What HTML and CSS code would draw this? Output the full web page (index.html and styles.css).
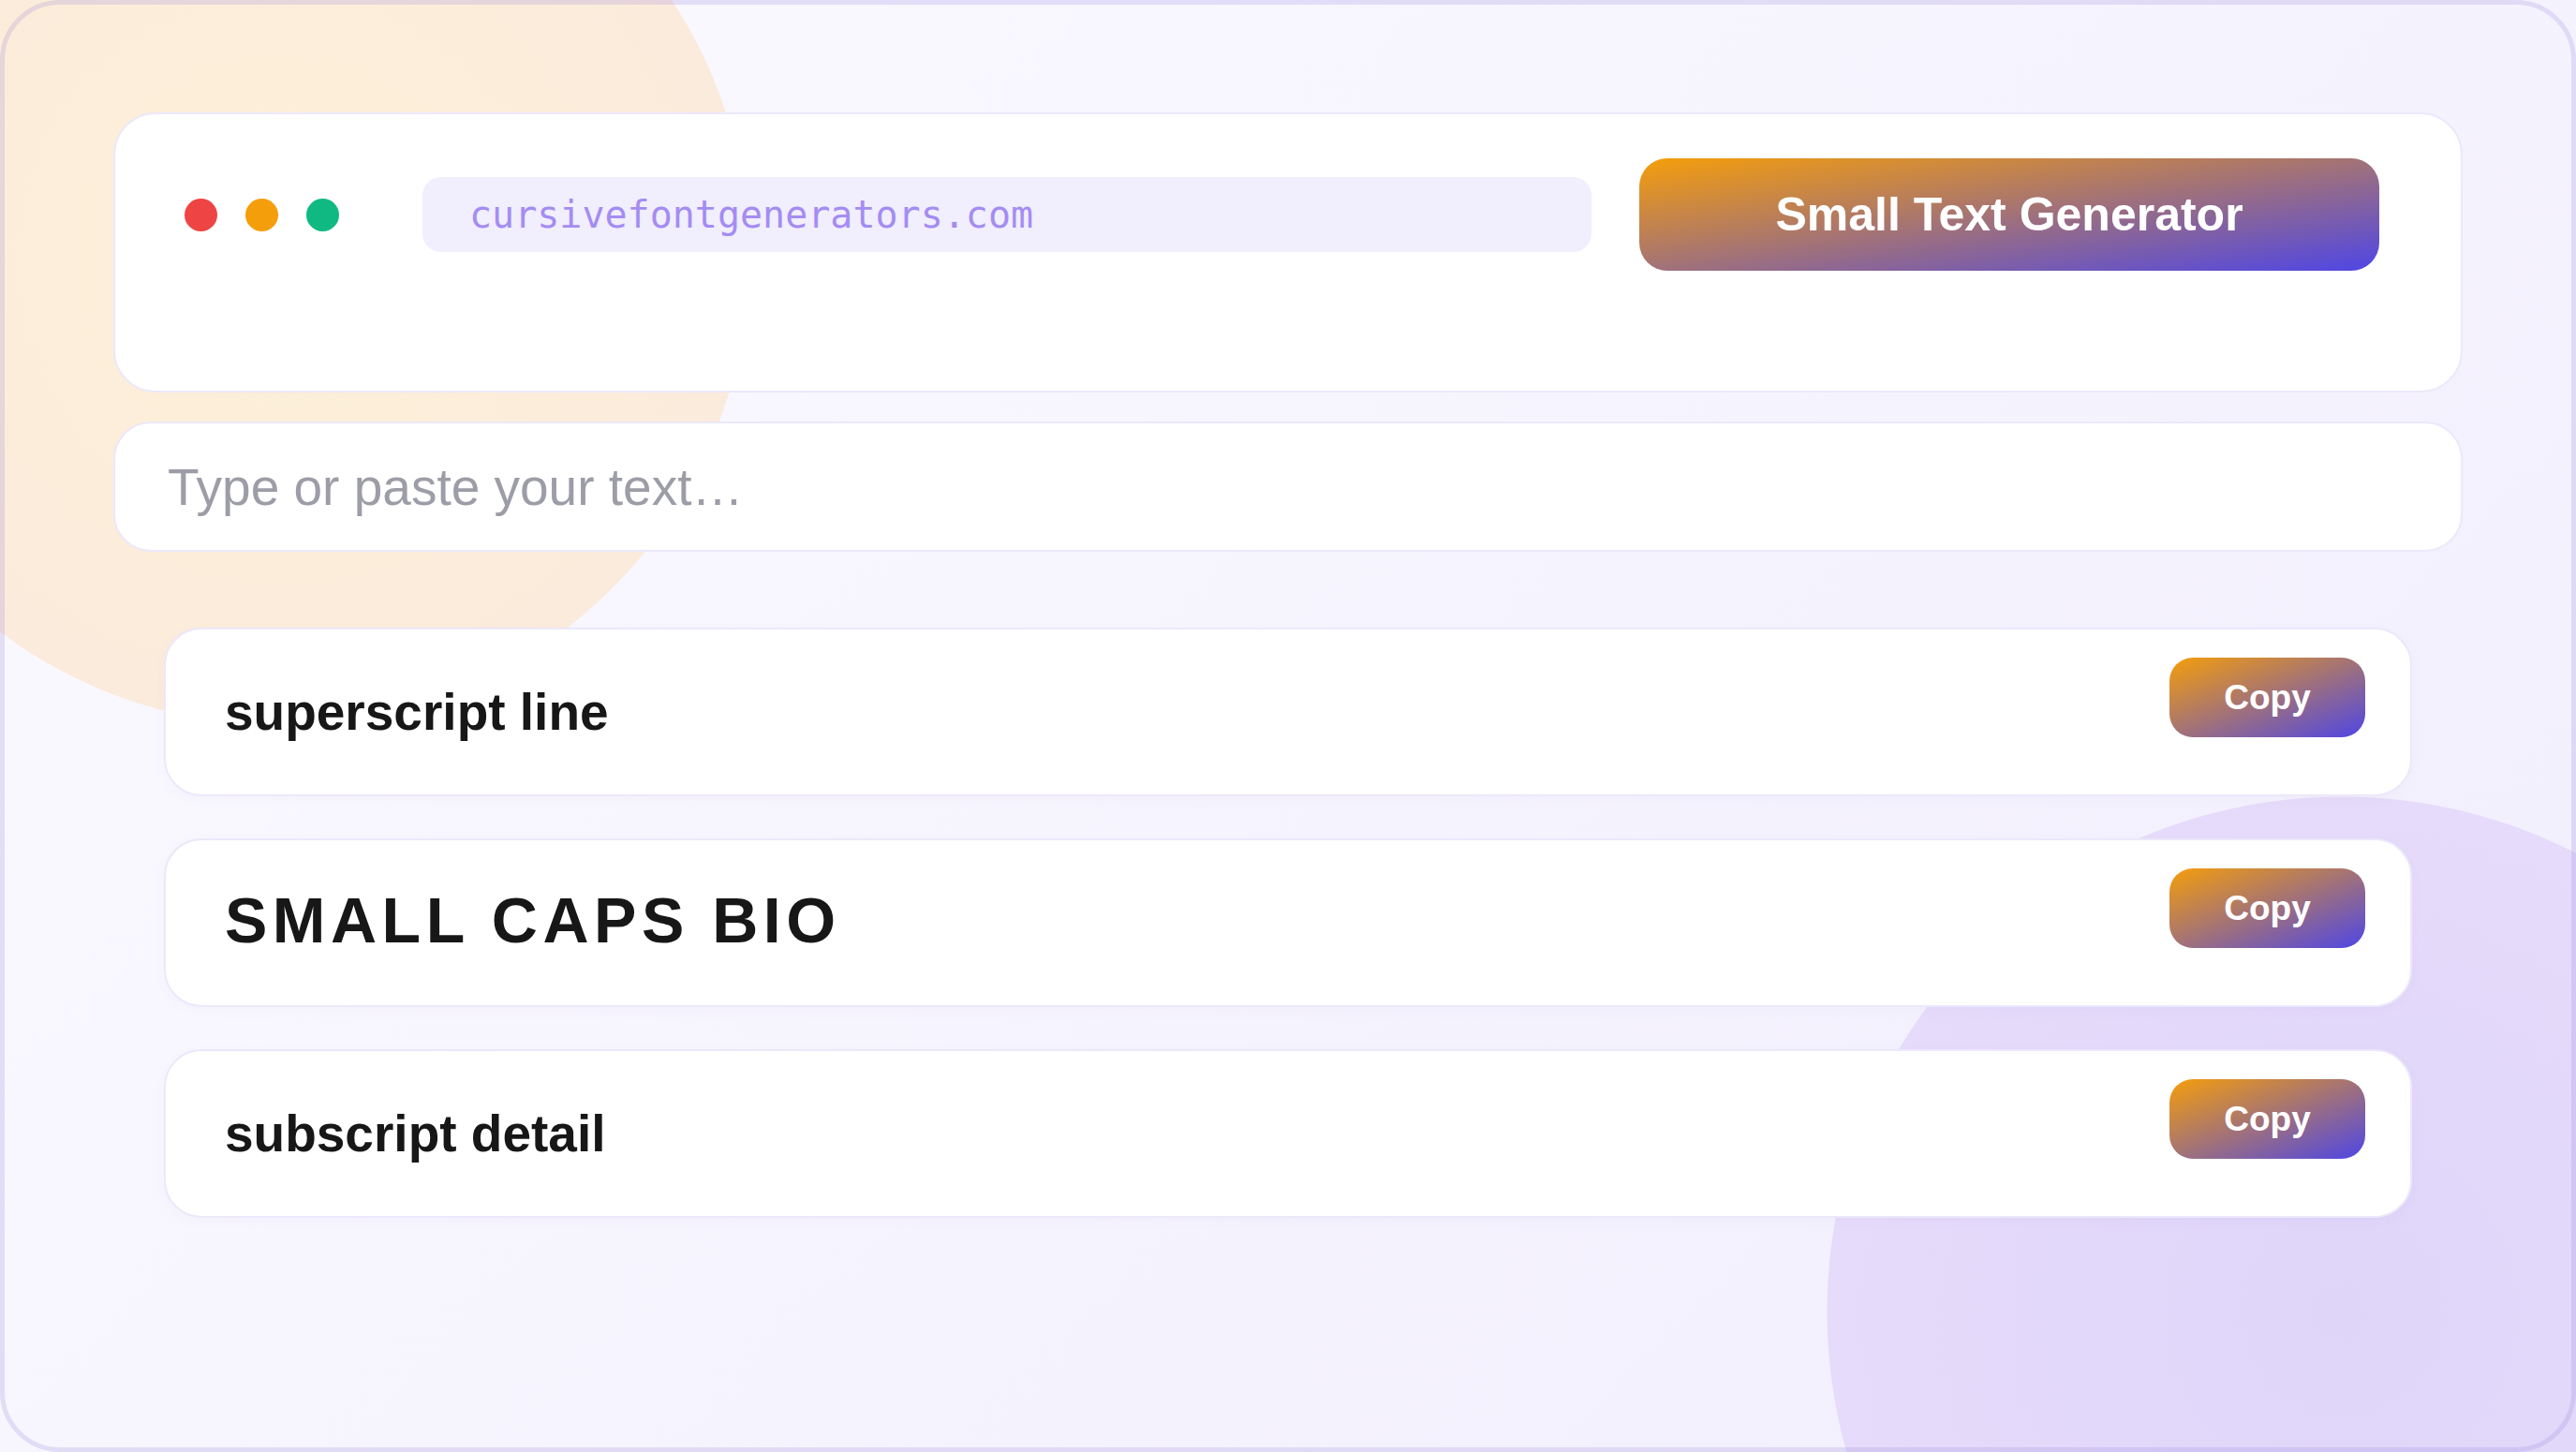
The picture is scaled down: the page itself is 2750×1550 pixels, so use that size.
FILE: index.html
```html
<!DOCTYPE html>
<html lang="en">
  <head>
    <title>Small Text Generator</title>
    <meta charset="utf-8" />
    <link rel="stylesheet" href="styles.css">
  </head>
  <body>
    <div class="frame">
      <div class="browser">
        <div class="bar">
          <div class="dots">
            <span class="dot red"></span>
            <span class="dot amber"></span>
            <span class="dot green"></span>
          </div>
          <div class="url">cursivefontgenerators.com</div>
          <div class="btn title-btn">Small Text Generator</div>
        </div>
      </div>

      <input class="text-input" type="text" placeholder="Type or paste your text…" />

      <ul class="results">
        <li class="result">
          <span class="result-text">superscript line</span>
          <button class="btn copy">Copy</button>
        </li>
        <li class="result">
          <span class="result-text caps">SMALL CAPS BIO</span>
          <button class="btn copy">Copy</button>
        </li>
        <li class="result">
          <span class="result-text">subscript detail</span>
          <button class="btn copy">Copy</button>
        </li>
      </ul>
    </div>
  </body>
</html>
```

FILE: styles.css
```css
html,
body {
  margin: 0;
  padding: 0;
}

body {
  height: 100vh;
  overflow: hidden;
  font-family: "Liberation Sans", Arial, sans-serif;
  color: #171717;
  background:
    radial-gradient(circle 500px at 300px 275px, #fdf1d8 0, #fbebdc 499px, transparent 500px),
    radial-gradient(circle 550px at 2500px 1400px, #ded5f9 0, #e6dbfa 549px, transparent 550px),
    linear-gradient(135deg, #fbfaff 0%, #f1eefd 100%);
}

.frame {
  box-sizing: border-box;
  height: 100vh;
  border: 5px solid rgba(150, 130, 220, 0.22);
  border-radius: 64px;
  padding: 115px 116px 0;
}

/* top browser card */
.browser {
  box-sizing: border-box;
  height: 299px;
  background: #fff;
  border: 2px solid #ece8fb;
  border-radius: 45px;
  padding: 47px 87px 0 74px;
}

.bar {
  display: flex;
  align-items: center;
}

.dots {
  display: flex;
  gap: 30px;
  margin-right: 89px;
}

.dot {
  width: 35px;
  height: 35px;
  border-radius: 50%;
}

.red {
  background: #ef4444;
}

.amber {
  background: #f59e0b;
}

.green {
  background: #10b981;
}

.url {
  flex: 1;
  height: 80px;
  display: flex;
  align-items: center;
  padding-left: 50px;
  margin-right: 51px;
  border-radius: 20px;
  background: #f1eefd;
  color: #a48cf3;
  font-family: "DejaVu Sans Mono", monospace;
  font-size: 40px;
}

.btn {
  display: flex;
  align-items: center;
  justify-content: center;
  border: 0;
  color: #fff;
  font-family: "Liberation Sans", Arial, sans-serif;
  font-weight: bold;
  background: linear-gradient(to bottom right, #f59e0b, #4f46e5);
  cursor: pointer;
}

.title-btn {
  width: 790px;
  height: 120px;
  border-radius: 30px;
  font-size: 50px;
}

/* text input */
.text-input {
  display: block;
  box-sizing: border-box;
  width: 100%;
  height: 139px;
  margin-top: 31px;
  padding: 0 56px;
  background: #fff;
  border: 2px solid #ece8fb;
  border-radius: 40px;
  font-family: "Liberation Sans", Arial, sans-serif;
  font-size: 55px;
  color: #171717;
  outline: none;
}

.text-input::placeholder {
  color: #9c9da7;
}

/* results */
.results {
  list-style: none;
  margin: 81px 54px 0;
  padding: 0;
  display: flex;
  flex-direction: column;
  gap: 45px;
}

.result {
  box-sizing: border-box;
  height: 180px;
  display: flex;
  align-items: center;
  justify-content: space-between;
  padding: 0 48px 0 63px;
  background: #fff;
  border: 2px solid #ece8fb;
  border-radius: 40px;
  box-shadow: 0 4px 14px rgba(120, 100, 200, 0.03);
}

.result-text {
  font-size: 55px;
  font-weight: bold;
  color: #171717;
}

.result-text.caps {
  font-size: 68px;
  letter-spacing: 5.5px;
  margin-bottom: 6px;
}

.copy {
  align-self: flex-start;
  margin-top: 30px;
  width: 209px;
  height: 85px;
  border-radius: 25px;
  font-size: 37px;
}
```
